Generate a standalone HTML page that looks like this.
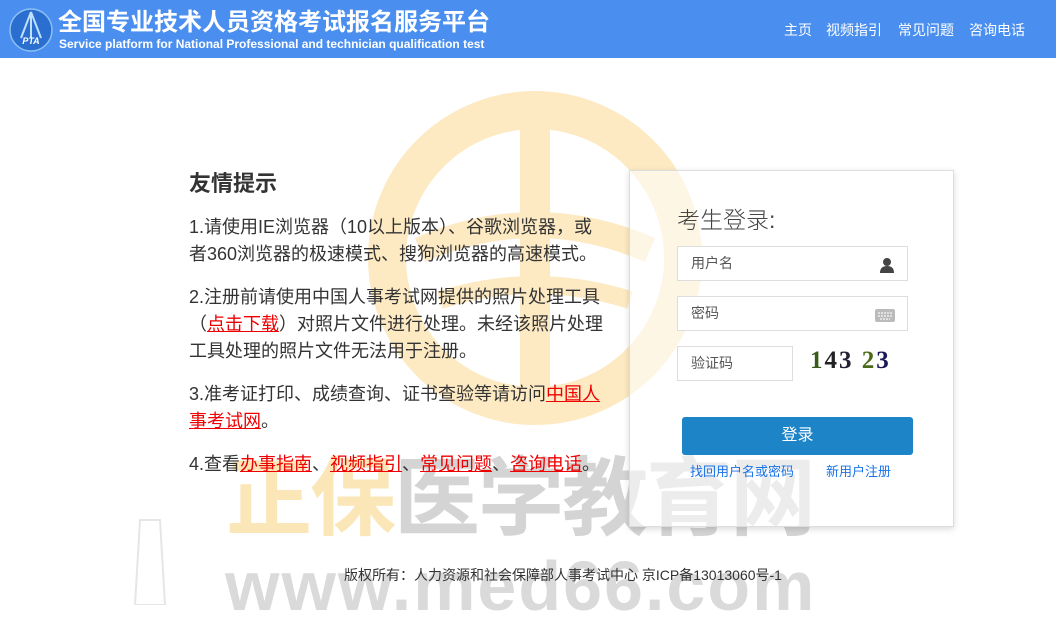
<!DOCTYPE html>
<html><head><meta charset="utf-8"><style>
*{margin:0;padding:0;box-sizing:border-box}
body{width:1056px;height:605px;overflow:hidden;background:#fff;position:relative;font-family:"Liberation Sans","Noto Sans CJK SC",sans-serif;color:#333}
.hd{position:absolute;left:0;top:0;width:1056px;height:58px;background:#4a8fef}
.t1{position:absolute;left:58px;top:2px;font-size:24px;font-weight:bold;color:#fff;letter-spacing:0}
.t2{position:absolute;left:59px;top:37px;font-size:12px;font-weight:bold;color:#fff;letter-spacing:0}
.nav{position:absolute;top:20px;font-size:14px;color:#fff}
.wm{position:absolute;white-space:nowrap;font-weight:bold}
.tip{position:absolute;left:189px;top:166px;width:440px;white-space:nowrap}
.tip h2{font-size:22px;font-weight:bold;color:#333;margin-bottom:16px}
.tip p{font-size:18px;line-height:27px;margin-bottom:16px;color:#333}
.tip a{color:#e00;text-decoration:underline}
.box{position:absolute;left:629px;top:170px;width:325px;height:357px;border:1px solid #ddd;box-shadow:0 2px 6px rgba(0,0,0,.15);background:rgba(255,255,255,.55)}
.inp{position:absolute;border:1px solid #ddd;background:#fff;font-size:14px;color:#555;padding-left:13px;line-height:33px;height:35px}
.btn{position:absolute;left:52px;top:246px;width:231px;height:38px;background:#1e84c8;border-radius:3px;color:#fff;font-size:16px;text-align:center;line-height:38px}
.lk{position:absolute;top:290px;font-size:13px;color:#1a73e8}
</style></head><body>
<svg style="position:absolute;left:0;top:0" width="1056" height="605">
<circle cx="535" cy="258" r="148" fill="none" stroke="#fdeac3" stroke-width="38"/>
<rect x="520" y="110" width="30" height="300" fill="#fdeac3"/>
<path d="M420 250 Q535 200 650 250" stroke="#fdeac3" stroke-width="26" fill="none"/>
<path d="M440 300 Q535 270 630 300" stroke="#fdeac3" stroke-width="18" fill="none"/>
<path d="M140 520 L160 520 L165 605 L135 605 Z" fill="none" stroke="#e6e6e6" stroke-width="2"/>
</svg>
<div class="wm" style="left:226px;top:428px;font-size:86px;letter-spacing:-2px"><span style="color:#fbe6b7">正保</span><span style="color:#d4d4d4">医学教育网</span></div>
<div class="wm" style="left:225px;top:546px;font-size:70px;color:#dadada;font-family:'Liberation Sans',sans-serif;letter-spacing:2px">www.med66.com</div>
<div class="hd">
<svg style="position:absolute;left:9px;top:8px" width="44" height="44"><circle cx="22" cy="22" r="21" fill="#2a6fd0" stroke="#8cc0f5" stroke-width="1.5"/><path d="M22 4 L12 30 M22 4 L32 30 M22 4 L22 30" stroke="#bfe0ff" stroke-width="2" fill="none"/><text x="22" y="36" font-size="9" font-weight="bold" fill="#fff" text-anchor="middle" font-style="italic">PTA</text></svg>
<div class="t1">全国专业技术人员资格考试报名服务平台</div>
<div class="t2">Service platform for National Professional and technician qualification test</div>
<div class="nav" style="left:784px">主页</div>
<div class="nav" style="left:826px">视频指引</div>
<div class="nav" style="left:898px">常见问题</div>
<div class="nav" style="left:969px">咨询电话</div>
</div>
<div class="tip">
<h2>友情提示</h2>
<p>1.请使用IE浏览器（10以上版本）、谷歌浏览器，或<br>者360浏览器的极速模式、搜狗浏览器的高速模式。</p>
<p>2.注册前请使用中国人事考试网提供的照片处理工具<br>（<a>点击下载</a>）对照片文件进行处理。未经该照片处理<br>工具处理的照片文件无法用于注册。</p>
<p>3.准考证打印、成绩查询、证书查验等请访问<a>中国人</a><br><a>事考试网</a>。</p>
<p>4.查看<a>办事指南</a>、<a>视频指引</a>、<a>常见问题</a>、<a>咨询电话</a>。</p>
</div>
<div class="box">
<div style="position:absolute;left:47px;top:30px;font-size:23px;color:#444;font-weight:300">考生登录:</div>
<div class="inp" style="left:47px;top:75px;width:231px">用户名<svg style="position:absolute;right:12px;top:10px" width="16" height="16"><circle cx="8" cy="5" r="4" fill="#444"/><path d="M1 16 Q1 9 8 9 Q15 9 15 16Z" fill="#444"/></svg></div>
<div class="inp" style="left:47px;top:125px;width:231px">密码<svg style="position:absolute;right:12px;top:10px" width="20" height="15"><rect x="0" y="2" width="20" height="13" rx="2" fill="#bbb"/><path d="M3 6h14M3 9h14M5 12h10" stroke="#eee" stroke-width="1.5" stroke-dasharray="2 1"/></svg></div>
<div class="inp" style="left:47px;top:175px;width:116px">验证码</div>
<div style="position:absolute;left:180px;top:176px;width:98px;height:34px;font-size:25px;font-weight:bold;letter-spacing:2px;font-family:'Liberation Serif',serif"><span style="color:#3a5a1a">1</span><span style="color:#222">4</span><span style="color:#223">3</span><span style="color:#4a6a1a"> 2</span><span style="color:#1a1a5a">3</span></div>
<div class="btn">登录</div>
<div class="lk" style="left:60px">找回用户名或密码</div>
<div class="lk" style="left:196px">新用户注册</div>
</div>
<div style="position:absolute;left:344px;top:565px;font-size:14px;color:#333">版权所有：人力资源和社会保障部人事考试中心 京ICP备13013060号-1</div>
</body></html>
